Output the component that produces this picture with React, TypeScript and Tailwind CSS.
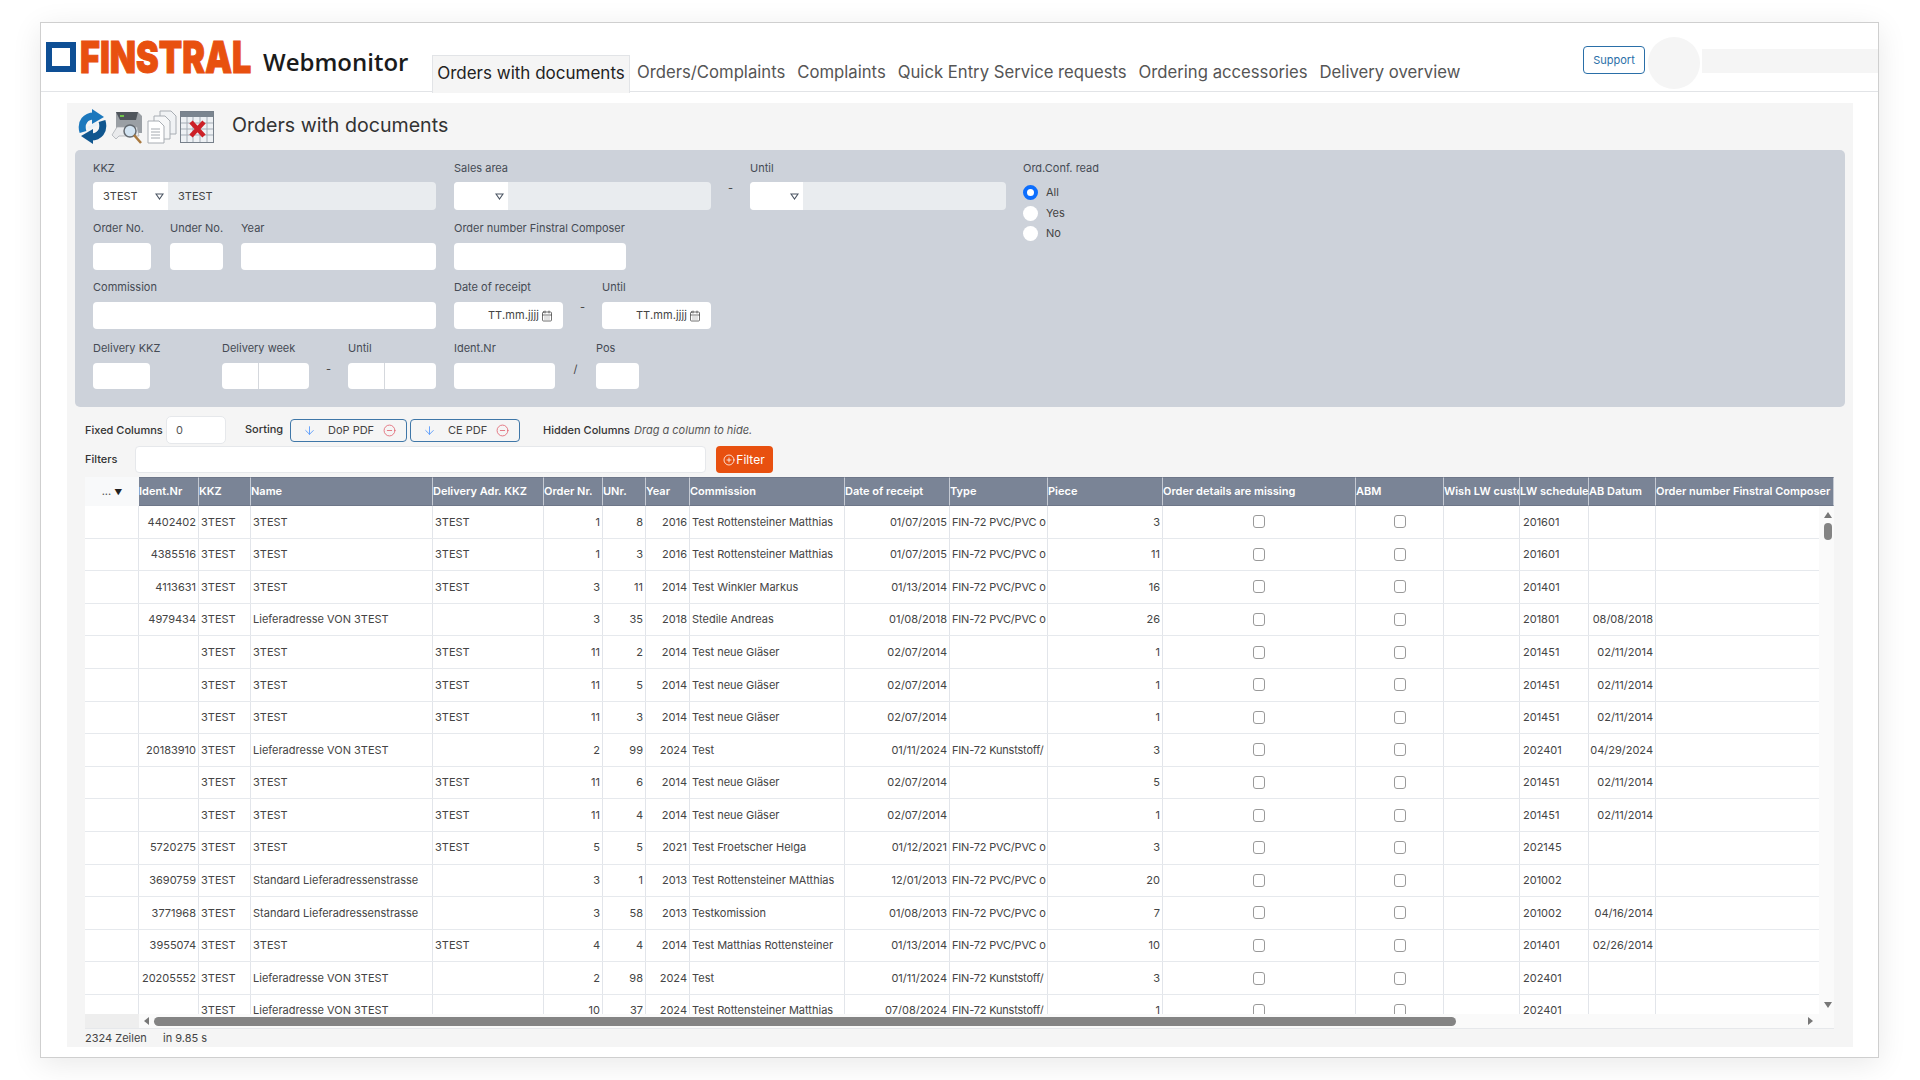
import { ArrowDown, CalendarDays, CircleMinus, CirclePlus } from 'lucide-react';

const navItems = ['Orders/Complaints', 'Complaints', 'Quick Entry Service requests', 'Ordering accessories', 'Delivery overview'];

const columns = [
  'Ident.Nr', 'KKZ', 'Name', 'Delivery Adr. KKZ', 'Order Nr.', 'UNr.', 'Year', 'Commission', 'Date of receipt', 'Type', 'Piece',
  'Order details are missing', 'ABM', 'Wish LW customer', 'LW schedule', 'AB Datum', 'Order number Finstral Composer',
];

const gridCols =
  'grid grid-cols-[54px_60px_52px_182px_111px_59px_43px_44px_155px_105px_98px_115px_193px_88px_76px_69px_67px_178px]';

const PVC = 'FIN-72 PVC/PVC o';
const KST = 'FIN-72 Kunststoff/';
const LIEF = 'Lieferadresse VON 3TEST';
const STD = 'Standard Lieferadressenstrasse';
const GLAS = 'Test neue Gläser';

const rows = [
  ['4402402', '3TEST', '3TEST', '1', '8', '2016', 'Test Rottensteiner Matthias', '01/07/2015', PVC, '3', '201601', ''],
  ['4385516', '3TEST', '3TEST', '1', '3', '2016', 'Test Rottensteiner Matthias', '01/07/2015', PVC, '11', '201601', ''],
  ['4113631', '3TEST', '3TEST', '3', '11', '2014', 'Test Winkler Markus', '01/13/2014', PVC, '16', '201401', ''],
  ['4979434', LIEF, '', '3', '35', '2018', 'Stedile Andreas', '01/08/2018', PVC, '26', '201801', '08/08/2018'],
  ['', '3TEST', '3TEST', '11', '2', '2014', GLAS, '02/07/2014', '', '1', '201451', '02/11/2014'],
  ['', '3TEST', '3TEST', '11', '5', '2014', GLAS, '02/07/2014', '', '1', '201451', '02/11/2014'],
  ['', '3TEST', '3TEST', '11', '3', '2014', GLAS, '02/07/2014', '', '1', '201451', '02/11/2014'],
  ['20183910', LIEF, '', '2', '99', '2024', 'Test', '01/11/2024', KST, '3', '202401', '04/29/2024'],
  ['', '3TEST', '3TEST', '11', '6', '2014', GLAS, '02/07/2014', '', '5', '201451', '02/11/2014'],
  ['', '3TEST', '3TEST', '11', '4', '2014', GLAS, '02/07/2014', '', '1', '201451', '02/11/2014'],
  ['5720275', '3TEST', '3TEST', '5', '5', '2021', 'Test Froetscher Helga', '01/12/2021', PVC, '3', '202145', ''],
  ['3690759', STD, '', '3', '1', '2013', 'Test Rottensteiner MAtthias', '12/01/2013', PVC, '20', '201002', ''],
  ['3771968', STD, '', '3', '58', '2013', 'Testkomission', '01/08/2013', PVC, '7', '201002', '04/16/2014'],
  ['3955074', '3TEST', '3TEST', '4', '4', '2014', 'Test Matthias Rottensteiner', '01/13/2014', PVC, '10', '201401', '02/26/2014'],
  ['20205552', LIEF, '', '2', '98', '2024', 'Test', '01/11/2024', KST, '3', '202401', ''],
  ['', LIEF, '', '10', '37', '2024', 'Test Rottensteiner Matthias', '07/08/2024', KST, '1', '202401', ''],
];

function Field({ label, className, children }: { label: string; className: string; children?: React.ReactNode }) {
  return (
    <div className={`shrink-0 ${className}`}>
      <div className="h-[14px] mb-2 text-[11px] leading-[14px] text-[#454b54] whitespace-nowrap">{label}</div>
      {children}
    </div>
  );
}

function Box({ className = 'h-[27px]' }: { className?: string }) {
  return <div className={`bg-white rounded-[4px] ${className}`} />;
}

function Caret() {
  return (
    <svg width="9" height="7" viewBox="0 0 9 7" className="shrink-0">
      <path d="M1 1h7L4.5 6z" fill="none" stroke="#4b5563" strokeWidth="1.1" />
    </svg>
  );
}

function SelectBox({ value, selectW, text }: { value?: string; selectW: string; text?: string }) {
  return (
    <div className="flex h-7 rounded-[4px] overflow-hidden bg-[#e9ecef] text-[11px] text-[#444]">
      <div className={`bg-white flex items-center justify-between pl-[10px] pr-[4px] ${selectW}`}>
        <span>{value}</span>
        <Caret />
      </div>
      <div className="pl-[10px] flex items-center">{text}</div>
    </div>
  );
}

function Sep({ text = '-', className = '' }: { text?: string; className?: string }) {
  return <div className={`w-[39px] shrink-0 text-center text-[11px] text-[#444] ${className}`}>{text}</div>;
}

function DateBox() {
  return (
    <div className="h-[27px] bg-white rounded-[4px] flex items-center justify-end pr-[10px] gap-[2px] text-[11px] text-[#444]">
      <span className="tracking-[0.1px]">TT.mm.jjjj</span>
      <CalendarDays size={12} strokeWidth={1.5} />
    </div>
  );
}

function Radio({ label, checked }: { label: string; checked?: boolean }) {
  return (
    <div className="flex items-center h-[15px] gap-2 text-[11px] text-[#444]">
      <span className={checked ? 'w-[15px] h-[15px] rounded-full bg-white border-[4px] border-[#0d6efd]' : 'w-[15px] h-[15px] rounded-full bg-white'} />
      {label}
    </div>
  );
}

function SortChip({ label, className }: { label: string; className: string }) {
  return (
    <div className={`h-[23px] border-[1.5px] border-[#3f77a8] rounded-[4px] flex items-center text-[11px] text-[#444] ${className}`}>
      <ArrowDown size={13} strokeWidth={1.4} className="text-[#3d8bfd] ml-[12px] shrink-0" />
      <span className="ml-[12px] flex-1">{label}</span>
      <CircleMinus size={13} strokeWidth={1.5} className="text-[#e0606e] mr-[10px] shrink-0" />
    </div>
  );
}

function ToolIcons() {
  return (
    <div className="flex items-center gap-[3px] ml-[10px]">
      <svg width="31" height="35" viewBox="0 0 31 35">
        <path d="M6 23 C3 13 9 7 17 7" fill="none" stroke="#1c78bd" strokeWidth="7" />
        <path d="M15 0 L27 8 L15 15z" fill="#1c78bd" />
        <path d="M25 12 C28 22 22 28 14 28" fill="none" stroke="#10568f" strokeWidth="7" />
        <path d="M16 20 L4 27 L16 35z" fill="#10568f" />
        <path d="M11 19 L20 15" stroke="#e8f1f8" strokeWidth="3" />
      </svg>
      <svg width="33" height="34" viewBox="0 0 33 34">
        <path d="M5 2 H27 L31 6 V23 H5z" fill="#9a9fa4" />
        <path d="M5 2 H27 L25 10 H9z" fill="#4f555b" />
        <rect x="9" y="5" width="4" height="2" fill="#6fc24a" />
        <path d="M1 25 L6 17 H26 L28 26 H8 L5 29z" fill="#e9eaec" stroke="#a4a8ad" strokeWidth="0.7" />
        <circle cx="19" cy="21" r="6" fill="#d3e4f2" stroke="#646a70" strokeWidth="1.5" />
        <path d="M23 25 L30 33" stroke="#a9793f" strokeWidth="2.5" />
      </svg>
      <svg width="30" height="34" viewBox="0 0 30 34">
        <path d="M13 1 H24 L29 6 V24 H13z" fill="#f0f2f4" stroke="#a8adb3" />
        <path d="M7 6 H18 L23 11 V29 H7z" fill="#f6f7f8" stroke="#a8adb3" />
        <path d="M1 11 H12 L17 16 V33 H1z" fill="#fff" stroke="#a8adb3" />
        <path d="M4 19 H13 M4 22 H13 M4 25 H13 M4 28 H13" stroke="#a5aab0" strokeWidth="1" />
      </svg>
      <svg width="34" height="32" viewBox="0 0 34 32">
        <rect x="0.5" y="0.5" width="33" height="31" fill="#eef1f4" stroke="#77808a" />
        <rect x="1" y="1" width="32" height="5" fill="#7b858f" />
        <path d="M1 12 H33 M1 18 H33 M1 24 H33 M7 6 V31 M13 6 V31 M20 6 V31 M27 6 V31" stroke="#a5adb6" strokeWidth="1" />
        <path d="M11 11 L24 25 M24 11 L11 25" stroke="#cc2027" strokeWidth="4.5" />
      </svg>
    </div>
  );
}

function TableRow({ row }: { row: string[] }) {
  const [ident, name, delivery, order, unr, year, commission, date, type, piece, lw, ab] = row;
  const base = 'border-r border-[#e2e5ea] overflow-hidden whitespace-nowrap flex items-center';
  const right = `${base} justify-end pr-[2px]`;
  const left = `${base} pl-[2px]`;
  return (
    <div className={`${gridCols} h-[32.6px] border-b-[1.5px] border-[#e6e9ed] text-[11px] text-[#444]`}>
      <div className={base} />
      <div className={right}>{ident}</div>
      <div className={left}>3TEST</div>
      <div className={left}>{name}</div>
      <div className={left}>{delivery}</div>
      <div className={right}>{order}</div>
      <div className={right}>{unr}</div>
      <div className={right}>{year}</div>
      <div className={left}>{commission}</div>
      <div className={right}>{date}</div>
      <div className={`${left} tracking-[-0.2px]`}>{type}</div>
      <div className={right}>{piece}</div>
      <div className={`${base} justify-center`}>
        <span className="w-3 h-[13px] rounded-[3px] border border-[#9a9a9a] bg-white" />
      </div>
      <div className={`${base} justify-center`}>
        <span className="w-3 h-[13px] rounded-[3px] border border-[#9a9a9a] bg-white" />
      </div>
      <div className={base} />
      <div className={`${left} pl-[3px]`}>{lw}</div>
      <div className={right}>{ab}</div>
      <div className={base} />
    </div>
  );
}

export default function App() {
  return (
    <div className="h-[1080px] bg-white pt-[22px] pl-[40px] pr-[41px] font-['Inter',sans-serif]">
      <div className="h-[1036px] border border-[#cfcfcf] bg-white shadow-[0_6px_28px_rgba(0,0,0,0.09)]">
        {/* Header */}
        <header className="h-[69px] border-b border-[#e2e4e7] flex">
          <div className="flex items-start pt-[19px] pl-[5px] w-[391px] shrink-0">
            <div className="w-[30px] h-[30px] border-[6px] border-[#0e4f95] shrink-0" />
            <div className="w-[172px] ml-[4px] h-[32px] shrink-0 leading-[32px] text-[44px] font-black text-[#e8500f] origin-left scale-x-[0.775] [-webkit-text-stroke:1px_#e8500f] whitespace-nowrap -mt-[1px]">
              FINSTRAL
            </div>
            <div className="ml-[11px] text-[24px] leading-[32px] font-['Open_Sans',sans-serif] font-semibold text-[#1b1b1b] mt-[4px]">
              Webmonitor
            </div>
          </div>
          <nav className="flex items-end text-[16.7px] text-[#555] h-[69px]">
            <div className="h-[38px] w-[198px] pb-[2px] text-[17px] bg-[#f5f5f5] border border-b-0 border-[#e2e4e7] text-[#222] flex items-center justify-center -mb-[1px]">
              Orders with documents
            </div>
            {navItems.map((item) => (
              <div key={item} className="h-[37px] pb-[2px] flex items-center ml-[7px] mr-[5px] first:ml-[6px] whitespace-nowrap">
                {item}
              </div>
            ))}
          </nav>
          <div className="ml-auto flex items-start">
            <div className="mt-[23px] w-[62px] h-[28px] border-[1.5px] border-[#2a6fa8] rounded-[4px] text-[11px] text-[#2a6fa8] flex items-center justify-center">
              Support
            </div>
            <div className="mt-[14px] ml-[3px] w-[52px] h-[52px] rounded-full bg-[#f5f5f5]" />
            <div className="mt-[26px] ml-[2px] w-[176px] h-[24px] bg-[#f5f5f5]" />
          </div>
        </header>

        {/* Content */}
        <main className="mt-[11px] ml-[26px] w-[1786px] h-[944px] bg-[#f5f5f5]">
          <div className="h-[47px] flex items-center">
            <ToolIcons />
            <h1 className="ml-[18px] -mt-[2px] text-[19.6px] text-[#333]">Orders with documents</h1>
          </div>

          {/* Filter panel */}
          <section className="mx-[8px] h-[257px] bg-[#cdd2da] rounded-[5px] pt-[11px] pl-[18px] flex">
            <div className="w-[913px] shrink-0">
              <div className="flex h-[49px]">
                <Field label="KKZ" className="w-[343px]">
                  <div className="-mt-[1px]"><SelectBox value="3TEST" selectW="w-[75px]" text="3TEST" /></div>
                </Field>
                <Field label="Sales area" className="w-[257px] ml-[18px]">
                  <div className="-mt-[1px]"><SelectBox selectW="w-[54px]" /></div>
                </Field>
                <Sep className="pt-[19px]" />
                <Field label="Until" className="w-[256px]">
                  <div className="-mt-[1px]"><SelectBox selectW="w-[53px]" /></div>
                </Field>
              </div>
              <div className="flex h-[49px] mt-[11px]">
                <Field label="Order No." className="w-[58px]"><Box /></Field>
                <Field label="Under No." className="w-[53px] ml-[19px]"><Box /></Field>
                <Field label="Year" className="w-[195px] ml-[18px]"><Box /></Field>
                <Field label="Order number Finstral Composer" className="w-[172px] ml-[18px]"><Box /></Field>
              </div>
              <div className="flex h-[49px] mt-[10px]">
                <Field label="Commission" className="w-[343px]"><Box /></Field>
                <Field label="Date of receipt" className="w-[109px] ml-[18px]"><DateBox /></Field>
                <Sep className="pt-[19px]" />
                <Field label="Until" className="w-[109px]"><DateBox /></Field>
              </div>
              <div className="flex h-[48px] mt-[12px]">
                <Field label="Delivery KKZ" className="w-[57px]"><Box className="h-[26px]" /></Field>
                <Field label="Delivery week" className="w-[87px] ml-[72px]">
                  <div className="h-[26px] bg-white rounded-[4px] flex">
                    <div className="w-[37px] border-r border-[#d5d8dd]" />
                  </div>
                </Field>
                <Sep className="pt-[20px]" />
                <Field label="Until" className="w-[88px]">
                  <div className="h-[26px] bg-white rounded-[4px] flex">
                    <div className="w-[37px] border-r border-[#d5d8dd]" />
                  </div>
                </Field>
                <Field label="Ident.Nr" className="w-[101px] ml-[18px]"><Box className="h-[26px]" /></Field>
                <Sep text="/" className="w-[41px] pt-[20px]" />
                <Field label="Pos" className="w-[43px]"><Box className="h-[26px]" /></Field>
              </div>
            </div>
            <div className="ml-[17px]">
              <div className="h-[14px] text-[11px] leading-[14px] text-[#454b54]">Ord.Conf. read</div>
              <div className="mt-[10px] flex flex-col gap-[5.5px]">
                <Radio label="All" checked />
                <Radio label="Yes" />
                <Radio label="No" />
              </div>
            </div>
          </section>

          {/* Grid controls */}
          <div className="ml-[18px] mr-[19px]">
            <div className="h-[28px] mt-[9px] flex items-center text-[11px] text-[#333]">
              <span className="font-medium w-[81px]">Fixed Columns</span>
              <div className="w-[60px] h-[28px] bg-white border border-[#e6e8eb] rounded-[5px] flex items-center pl-[9px] text-[#555]">0</div>
              <span className="ml-[19px] -mt-[2px] font-medium w-[45px]">Sorting</span>
              <SortChip label="DoP PDF" className="w-[117px]" />
              <SortChip label="CE PDF" className="w-[110px] ml-[3px]" />
              <span className="ml-[23px] font-medium">Hidden Columns</span>
              <span className="ml-[4px] italic text-[#555]">Drag a column to hide.</span>
            </div>
            <div className="h-[27px] mt-[2px] flex items-center text-[11px] text-[#333]">
              <span className="font-medium w-[49.5px]">Filters</span>
              <div className="w-[571px] h-[27px] bg-white border border-[#e6e8eb] rounded-[4px]" />
              <div className="ml-[10px] w-[57px] h-[27px] rounded-[4px] bg-[#e8500f] text-white text-[12px] flex items-center justify-center gap-[1px]">
                <CirclePlus size={12} strokeWidth={1.6} />
                Filter
              </div>
            </div>

            {/* Table */}
            <div className="mt-[4px] bg-[#fafafa] border-b border-[#e6e8eb]">
              <div className={`${gridCols} h-[29px] text-[11px]`}>
                <div className="bg-[#f8f9fa] flex items-center justify-center gap-[3px] text-[#555]">
                  ...
                  <span className="text-[8px] text-[#222]">▼</span>
                </div>
                {columns.map((col) => (
                  <div key={col} className="bg-[#7a8496] border-r border-[#c5cad3] border-y-[1px] border-y-[#6e7789] text-white font-semibold flex items-center overflow-hidden whitespace-nowrap">
                    {col}
                  </div>
                ))}
              </div>
              <div className="flex h-[508px]">
                <div className="w-[1734px] overflow-hidden bg-white">
                  {rows.map((row, i) => (
                    <TableRow key={i} row={row} />
                  ))}
                </div>
                <div className="w-[15px] pl-[2px] flex flex-col items-center pt-[6px] pb-[6px]">
                  <span className="w-0 h-0 border-x-[4px] border-x-transparent border-b-[6px] border-b-[#777]" />
                  <span className="w-2 h-[17px] mt-[5px] rounded-full bg-[#848484]" />
                  <span className="mt-auto w-0 h-0 border-x-[4px] border-x-transparent border-t-[6px] border-t-[#777]" />
                </div>
              </div>
              <div className="flex items-center h-[14px]">
                <div className="w-[54px] h-full bg-[#eeeeee]" />
                <span className="ml-[5px] w-0 h-0 border-y-[4px] border-y-transparent border-r-[5px] border-r-[#777]" />
                <div className="ml-[5px] w-[1302px] h-[9px] rounded-full bg-[#848484]" />
                <span className="ml-[352px] w-0 h-0 border-y-[4px] border-y-transparent border-l-[5px] border-l-[#777]" />
              </div>
            </div>
            <div className="pt-[2px] text-[11px] leading-[14px] text-[#444] flex">
              <span className="w-[78px]">2324 Zeilen</span>
              <span>in 9.85 s</span>
            </div>
          </div>
        </main>
      </div>
    </div>
  );
}
